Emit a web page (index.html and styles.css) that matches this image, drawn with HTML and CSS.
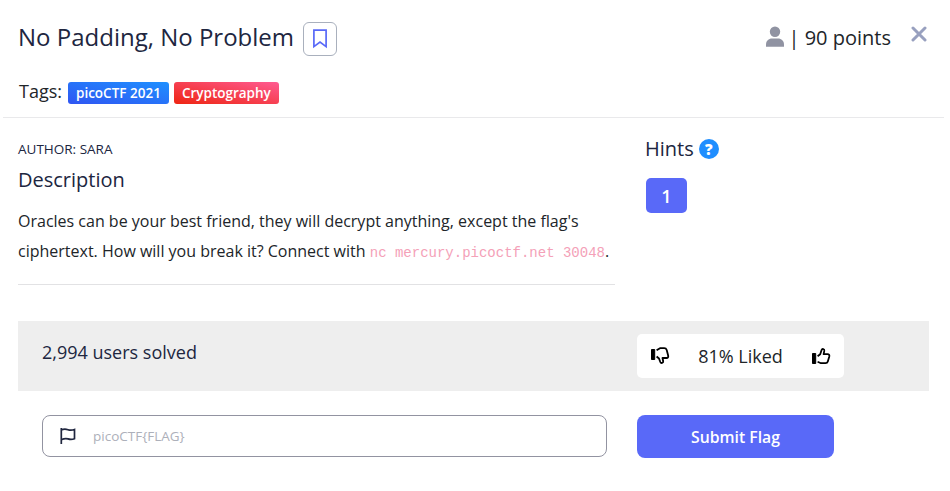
FILE: index.html
```html
<!DOCTYPE html>
<html lang="en">
<head>
<meta charset="utf-8">
<title>No Padding, No Problem</title>
<link rel="stylesheet" href="styles.css">
</head>
<body>
<main class="modal">
  <header class="header">
    <div class="title-row">
      <h1 class="title">No Padding, No Problem</h1>
      <button class="bookmark" aria-label="Bookmark">
        <svg width="16" height="20" viewBox="0 0 16 20"><path d="M1.9 1.2H14.1V17.6L8 13.1L1.9 17.6Z" fill="none" stroke="#5969f8" stroke-width="1.7"/></svg>
      </button>
      <div class="points">
        <svg class="user" width="20" height="22" viewBox="0 0 20 22" fill="#9093a2"><circle cx="10" cy="5.700" r="5.200"/><path d="M1 20.800V18.500C1 15 3.600 12.500 7 12.500H13C16.400 12.500 19 15 19 18.500V20.800Z"/></svg>
        <span class="points-text">| 90 points</span>
      </div>
      <button class="close" aria-label="Close">
        <svg width="16" height="16" viewBox="0 0 16 16"><path d="M2 2L14 14M14 2L2 14" stroke="#98a0bf" stroke-width="3" stroke-linecap="round"/></svg>
      </button>
    </div>
    <div class="tags"><span class="tags-label">Tags:</span><span class="tag tag-event">picoCTF 2021</span><span class="tag tag-category">Cryptography</span></div>
  </header>
  <section class="content">
    <div class="details">
      <div class="author">AUTHOR: SARA</div>
      <h2 class="subtitle">Description</h2>
      <p class="description">Oracles can be your best friend, they will decrypt anything, except the flag's<br>ciphertext. How will you break it? Connect with <code>nc mercury.picoctf.net 30048</code>.</p>
    </div>
    <aside class="hints">
      <h2 class="subtitle hints-title">Hints
        <span class="help">?</span>
      </h2>
      <button class="hint">1</button>
    </aside>
  </section>
  <section class="stats">
    <span class="solved">2,994 users solved</span>
    <div class="rating">
      <svg width="20" height="20" viewBox="0 0 20 20"><g transform="translate(0 1)"><path d="M1.500 2.500H4.700V12.500H1.500Z" stroke="#000" stroke-linejoin="round"/><path d="M6.600 3.300L10 1.200H14.300C15.500 1.200 16.300 1.900 16.700 3L18.200 8.800C18.500 10 17.800 11 16.600 11H12.500L13.200 14.200C13.500 16 11 16.700 10.300 15L9 11.500L6.600 9.500" fill="none" stroke="#000" stroke-width="1.800" stroke-linejoin="round"/></g></svg>
      <span>81% Liked</span>
      <svg width="20" height="20" viewBox="0 0 20 20"><path d="M1.500 7.500H4.700V17.500H1.500Z" stroke="#000" stroke-linejoin="round"/><path d="M6.600 10.300L9.200 8.300L10.600 4C11.200 2.300 13.600 2.900 13.300 4.900L12.600 8.100H16.600C18 8.100 18.600 9.200 18.300 10.400L16.800 15.500C16.500 16.600 15.500 17.200 14.500 17.200H10L6.600 15.700" fill="none" stroke="#000" stroke-width="1.800" stroke-linejoin="round"/></svg>
    </div>
  </section>
  <form class="submission">
    <label class="flag-field">
      <svg width="18" height="18" viewBox="0 0 18 18" fill="none" stroke="#20263f" stroke-width="1.700"><path d="M2.300 1V17M2.300 3C5.300 1.400 7.200 2 9 2.700S12.700 3.500 15.500 2.500V11.700C12.700 12.800 10.800 12.500 9 11.900S5.300 11.300 2.300 12.800"/></svg>
      <input class="flag-input" type="text" placeholder="picoCTF{FLAG}">
    </label>
    <button class="submit" type="button">Submit Flag</button>
  </form>
</main>
</body>
</html>
```
FILE: styles.css
```css
* { box-sizing: border-box; }
body {
  margin: 0;
  background: #fff;
  color: #212529;
  font-family: "Open Sans", "Noto Sans", sans-serif;
  font-size: 16px;
}
button { border: 0; padding: 0; font-family: inherit; }
svg { display: block; flex: none; }
.modal { padding: 0 6px 0 3px; }
.header {
  height: 118px;
  padding: 18px 17px 0 15px;
  border-bottom: 1px solid #e9e9eb;
}
.title-row { display: flex; height: 38px; }
.title {
  margin: 0;
  color: #20263f;
  font-size: 24px;
  font-weight: 400;
  line-height: 38px;
  white-space: nowrap;
}
.bookmark {
  display: flex;
  align-items: center;
  justify-content: center;
  width: 34px;
  height: 34px;
  margin: 4px 0 0 9px;
  border: 1px solid #a9b0bd;
  border-radius: 6px;
  background: #fff;
}
.points { display: flex; margin-left: auto; }
.user { margin: 8px 4px 0 0; }
.points-text { font-size: 20px; line-height: 40px; white-space: nowrap; }
.close {
  display: flex;
  height: 16px;
  margin: 8px 0 0 20px;
  background: none;
}
.tags { display: flex; align-items: center; height: 34px; margin-top: 18px; }
.tags-label { width: 50px; padding-left: 1px; font-size: 18px; }
.tag {
  height: 22px;
  margin: 3px 5px 0 0;
  padding: 0 8px;
  border-radius: 3px;
  color: #fff;
  font-size: 13.500px;
  font-weight: 600;
  line-height: 22px;
}
.tag-event { background: linear-gradient(to top right, #2f55f2, #1f90ff); }
.tag-category { background: linear-gradient(to top right, #ee2512, #ff5b92); }
.content { display: flex; height: 203px; padding: 20px 15px 0; }
.details {
  width: 597px;
  height: 147px;
  margin-right: 30px;
  border-bottom: 1px solid #e2e2e4;
}
.author { color: #20263f; font-size: 13.500px; line-height: 22px; }
.subtitle { margin: 0; color: #20263f; font-size: 20px; font-weight: 400; line-height: 24px; }
.details .subtitle { margin-top: 8px; }
.description { margin: 14px 0 0; line-height: 30px; white-space: nowrap; }
.description code { color: #f4a1b8; font: 14px "Liberation Mono", monospace; }
.hints-title { display: flex; align-items: center; gap: 5px; height: 22px; }
.help {
  width: 20px;
  height: 20px;
  border-radius: 50%;
  background: #1f8eff;
  color: #fff;
  font-size: 15px;
  font-weight: 800;
  line-height: 20px;
  text-align: center;
}
.hint {
  display: block;
  width: 41px;
  height: 35px;
  margin: 18px 0 0 1px;
  border-radius: 5px;
  background: #5969f8;
  color: #fff;
  font-size: 18px;
  font-weight: 600;
}
.stats {
  display: flex;
  height: 70px;
  margin: 0 15px;
  padding: 13px 0 0 24px;
  background: #eee;
  color: #20263f;
  font-size: 18px;
}
.solved { width: 595px; line-height: 36px; }
.rating {
  display: flex;
  align-items: center;
  justify-content: space-between;
  width: 207px;
  height: 44px;
  padding: 0 13px;
  border-radius: 5px;
  background: #fff;
  color: #212529;
}
.submission { display: flex; gap: 30px; margin: 24px 0 0 39px; }
.flag-field {
  display: flex;
  align-items: center;
  width: 565px;
  height: 42px;
  padding: 0 16px;
  border: 1px solid #9293a1;
  border-radius: 8px;
}
.flag-input {
  flex: 1;
  margin-left: 16px;
  padding: 0;
  border: 0;
  font: 13.500px "Open Sans", "Noto Sans", sans-serif;
  outline: none;
}
.flag-input::placeholder { color: #adb0ba; }
.submit {
  width: 197px;
  height: 43px;
  border-radius: 8px;
  background: #5969f8;
  color: #fff;
  font-size: 15.750px;
  font-weight: 600;
}
```
